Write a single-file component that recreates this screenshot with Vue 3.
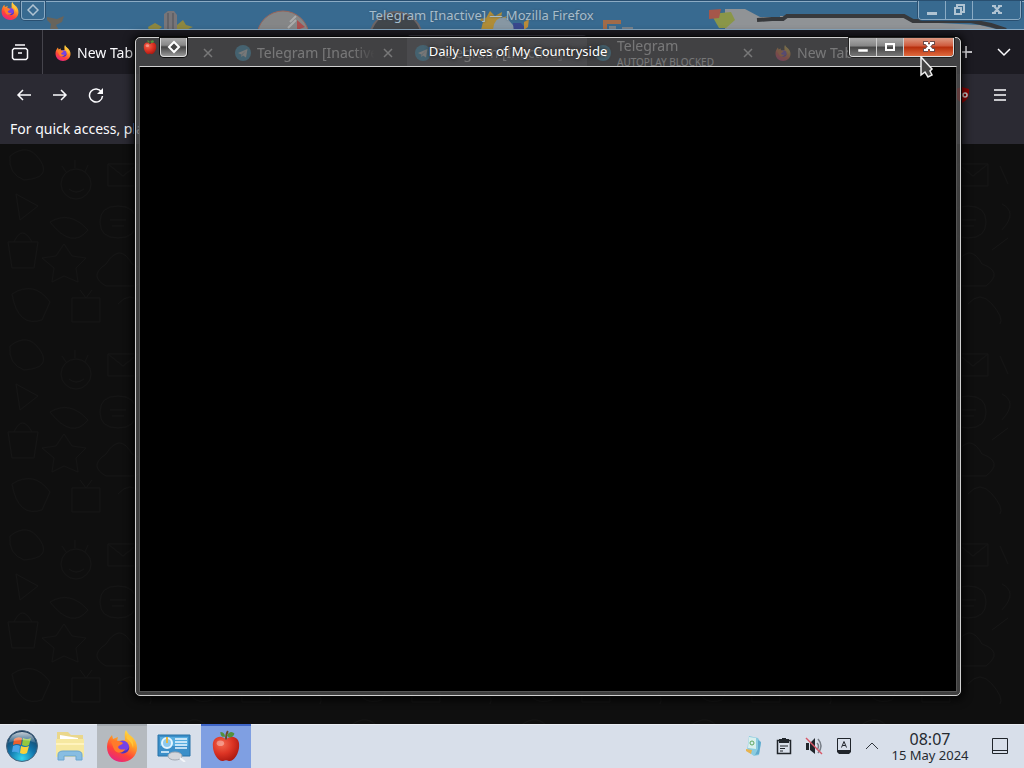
<script setup>
const tabs = [
  { title: 'New Tab', icon: 'fox' },
  { title: 'Telegram [Inactive]', icon: 'plane' },
  { title: 'Telegram [Inactive]', icon: 'plane', active: true, noClose: true },
  { title: 'Telegram', icon: 'plane', note: 'AUTOPLAY BLOCKED' },
  { title: 'New Tab', icon: 'fox', noClose: true },
]
</script>

<template>
  <div class="desktop">
    <svg class="defs" width="0" height="0" aria-hidden="true">
      <defs>
        <linearGradient id="foxBody" x1="0.8" y1="0" x2="0.3" y2="1">
          <stop offset="0" stop-color="#ffe84a" />
          <stop offset="0.4" stop-color="#ff9a27" />
          <stop offset="0.7" stop-color="#ff4438" />
          <stop offset="1" stop-color="#e42584" />
        </linearGradient>
        <radialGradient id="appleBody" cx="0.35" cy="0.3" r="0.8">
          <stop offset="0" stop-color="#f4674d" />
          <stop offset="0.5" stop-color="#dc3424" />
          <stop offset="1" stop-color="#a3140e" />
        </radialGradient>
        <radialGradient id="orb" cx="0.5" cy="0.9" r="0.9">
          <stop offset="0" stop-color="#35d3ec" />
          <stop offset="0.45" stop-color="#1277ae" />
          <stop offset="1" stop-color="#17324f" />
        </radialGradient>
        <linearGradient id="gloss" x1="0" y1="0" x2="0" y2="1">
          <stop offset="0" stop-color="#fff" stop-opacity="0.75" />
          <stop offset="1" stop-color="#fff" stop-opacity="0.1" />
        </linearGradient>
        <symbol id="fox" viewBox="0 0 32 32">
          <path fill="url(#foxBody)" d="M20 0c2 3 2 4 5 6 4 3 6 7 6 12 0 8-7 14-15 14S1 26 1 17C1 12 3 8 6 5l1 4 5-2-1 4 8-1c0-4-1-7 1-10z" />
          <circle cx="16.500" cy="17" r="6.500" fill="#7542e5" />
          <path fill="#4f35b8" d="M11 18c0 4 4 6 8 5 3-1 5-4 4-7 0 5-7 7-12 2z" />
          <path fill="#ff7a2b" d="M5 12c4-3 9-1 12 1-1 2-4 2-5 4 1 3 5 3 7 2-2 5-9 5-11 0-1-2-1-3-3-7z" />
          <path fill="#ffc63b" d="M22 4c5 5 6 10 5 14-1-5-3-7-6-9-1-2 0-4 1-5z" />
        </symbol>
        <symbol id="plane" viewBox="0 0 16 16">
          <circle cx="8" cy="8" r="8" fill="#2ba5dc" />
          <path fill="#fff" d="M3 8l9.500-4-1.500 8.500-3-2-1.500 1.500-.3-2.500z" />
          <path fill="#a9cfe2" d="M6.200 9.500L11 5.500 7.500 10l-1 2z" />
        </symbol>
        <symbol id="apple" viewBox="0 0 32 36">
          <path fill="url(#appleBody)" d="M16 11C10 5 1 9 2 18c0 8 6 17 11 16 2-1 4-1 6 0 5 1 11-8 11-16C31 9 22 5 16 11z" />
          <path d="M16 11c0-4 0-6 2-9" stroke="#6b4a25" stroke-width="2" fill="none" />
          <path fill="#54903a" d="M17 7c2-5 6-5 8-2-1 3-4 6-8 2zM15 8c-4 1-5-2-5-5 3 0 5 2 5 5z" />
          <ellipse cx="10" cy="15" rx="4" ry="3" fill="#fff" opacity="0.35" />
        </symbol>
        <pattern id="doodles" width="170" height="190" patternUnits="userSpaceOnUse">
          <g fill="none" stroke="#151515" stroke-width="1">
            <circle cx="76" cy="40" r="15" /><path d="M62 22l4 6M75 16v8M88 21l-3 7M69 45q7 6 15 0" />
            <path d="M10 12q18-14 30 4t-16 20q-16-6-14-24zM16 50l22 12-18 14zM108 20h30v22h-30zl15 12 15-12" />
            <path d="M50 78q20-12 38 8-16 20-38-8zM118 62q18 0 18 16t-18 16-18-16 18-16M110 76h16M112 82h12" />
            <path d="M8 98h30l-4 26H12zM14 98q8-18 18 0M56 112l8-12 8 12 14 2-10 10 2 14-14-6-12 6 2-14-12-10z" />
            <path d="M106 120q14-22 26 0 22 8 4 22h-30q-18-10 0-22zM12 150q22-14 38 8l-8 18q-24 8-30-26zM72 154h28v24H72zM80 146l6 8 6-8M118 160q12-14 24 0t8 20M142 106l16-12M150 22l8 18M152 60q16 8 0 26" />
          </g>
        </pattern>
      </defs>
    </svg>

    <main class="workspace">
      <section class="browser" aria-label="Mozilla Firefox">
        <header class="browser-title">
          <svg class="art" viewBox="0 0 1024 26" preserveAspectRatio="xMidYMid slice" aria-hidden="true">
            <g transform="translate(0 -3)">
            <path fill="#68645b" d="M47 17l10 2 7-3-2 6-6 3 3 5h-9l1-6-4-4z" />
            <path fill="#777579" d="M164 14l4-3h6l3 4v15h-13z" /><path stroke="#4e5157" d="M168 13v17M173 13v17" />
            <path fill="#8d873f" d="M148 27l7-4 7 4-4 3h-9zM177 25l6-5 3 5 7 2-7 3h-9z" />
            <circle cx="283" cy="37" r="26" fill="#858687" stroke="#98665b" /><path stroke="#aaa" stroke-width="2" d="M290 22l6-6M288 28l8-8" /><path fill="#a94e4e" d="M297 20l8 7-8 3z" />
            <circle cx="396" cy="38" r="26" fill="#41464b" stroke="#6c6566" stroke-width="2" />
            <path fill="#af8c37" d="M481 30l2-8-5-3 8-1 4-7 5 5 7-4-1 6 6-2-3 6 5 8z" /><path fill="#8797a3" d="M493 30q1-15 14-12l10 12z" /><path fill="#38478d" d="M513 23h8l5 6-4 4h-8z" /><path fill="#b98b3b" d="M524 22l5-3-1 8-4 3z" />
            <path fill="#a16b49" d="M603 20h18v4h-14v6h-4z" /><path fill="#77818a" d="M609 26h7v4h-7zM622 27h11v3h-11z" />
            <path fill="#909396" d="M725 9h20l15 8h20v-1h124l14 6 62 3 24 6H725z" />
            <path fill="none" stroke="#37393c" stroke-width="4" d="M757 20l15-1h11l4-3h117l9 5h58l20 4 15 5" />
            <path fill="#8a9648" d="M711 14l20-2 4 8-9 8h-7z" /><path fill="#a5574a" d="M709 10l12-1-2 9-10 1z" />
            </g>
          </svg>
          <svg class="app-icon" width="18" height="18" aria-hidden="true"><use href="#fox" /></svg>
          <button class="sys pale" aria-label="Window menu"><svg width="12" height="12" viewBox="0 0 12 12"><path d="M6 1l5 5-5 5-5-5z" fill="none" stroke="currentColor" stroke-width="1.500" /></svg></button>
          <h2>Telegram [Inactive] — Mozilla Firefox</h2>
          <div class="controls pale">
            <button aria-label="Minimize"><svg width="14" height="14"><path d="M2 9h10v3H2z" fill="currentColor" /></svg></button>
            <button aria-label="Restore"><svg width="14" height="14"><path d="M5 4V2h7v7h-2M3 5h6v6H3z" fill="none" stroke="currentColor" stroke-width="2" /></svg></button>
            <button class="close" aria-label="Close"><svg width="14" height="14"><path d="M4 3l6 7M10 3l-6 7M2 3h4M8 3h4M2 10h4M8 10h4" stroke="currentColor" stroke-width="2" /></svg></button>
          </div>
        </header>

        <nav class="tabbar" aria-label="Tabs">
          <button class="view" aria-label="Recent browsing"><svg width="18" height="18" viewBox="0 0 18 18" fill="none" stroke="currentColor" stroke-width="1.500"><path d="M4 2h10M3 5.500h12l1.500 1.500v8l-1.500 1.500H3L1.500 15V7zM7 10h4" /></svg></button>
          <div class="tabs">
            <div v-for="(tab, i) in tabs" :key="i" class="tab" :class="{ active: tab.active }">
              <svg width="16" height="16" aria-hidden="true"><use :href="'#' + tab.icon" /></svg>
              <span class="tab-text"><span>{{ tab.title }}</span><small v-if="tab.note">{{ tab.note }}</small></span>
              <button v-if="!tab.noClose" aria-label="Close tab"><svg width="10" height="10"><path d="M1 1l8 8M9 1L1 9" stroke="currentColor" stroke-width="1.500" /></svg></button>
            </div>
          </div>
          <button class="add" aria-label="New tab"><svg width="14" height="14"><path d="M7 1v12M1 7h12" stroke="currentColor" stroke-width="1.500" /></svg></button>
          <button class="list" aria-label="List all tabs"><svg width="14" height="14"><path d="M1 4l6 6 6-6" fill="none" stroke="currentColor" stroke-width="1.500" /></svg></button>
        </nav>

        <div class="toolbar">
          <button aria-label="Back"><svg width="16" height="16"><path d="M15 8H2M7 3L2 8l5 5" fill="none" stroke="currentColor" stroke-width="1.500" /></svg></button>
          <button aria-label="Forward"><svg width="16" height="16"><path d="M1 8h13M9 3l5 5-5 5" fill="none" stroke="currentColor" stroke-width="1.500" /></svg></button>
          <button aria-label="Reload"><svg width="16" height="16"><path d="M13.500 5A6.500 6.500 0 1 0 14.500 9" fill="none" stroke="currentColor" stroke-width="1.500" /><path d="M15 1v6H9z" fill="currentColor" /></svg></button>
          <span class="space"></span>
          <button class="shield" aria-label="Content blocker"><svg width="16" height="16"><path d="M8 0l7 2c0 7-1 11-7 14C2 13 1 9 1 2z" fill="#900" /><circle cx="11" cy="8" r="2" fill="none" stroke="#ddd" stroke-width="1.500" /></svg></button>
          <button aria-label="Menu"><svg width="14" height="14"><path d="M1 2h12M1 7h12M1 12h12" stroke="currentColor" stroke-width="1.500" /></svg></button>
        </div>
        <p class="bookmarks">For quick access, place your bookmarks here on the bookmarks toolbar.</p>
        <div class="page"><svg width="100%" height="100%" aria-hidden="true"><rect width="100%" height="100%" fill="url(#doodles)" /></svg></div>
      </section>

      <section class="game" aria-label="Daily Lives of My Countryside">
        <header class="game-title">
          <svg class="app-icon" width="16" height="16" aria-hidden="true"><use href="#apple" /></svg>
          <button class="sys" aria-label="Window menu"><svg width="14" height="14" viewBox="0 0 14 14"><path d="M7 2l5 5-5 5-5-5z" fill="#444" stroke="#fff" stroke-width="2" /></svg></button>
          <h1>Daily Lives of My Countryside</h1>
          <div class="controls">
            <button aria-label="Minimize"><svg width="14" height="14"><path d="M2 9h10v3H2z" fill="#fff" stroke="#555" stroke-width="0.500" /></svg></button>
            <button aria-label="Maximize"><svg width="14" height="14"><path d="M3 4h8v6H3z" fill="none" stroke="#fff" stroke-width="2" /></svg></button>
            <button class="close" aria-label="Close"><svg width="14" height="14"><g fill="none"><path d="M4 3l6 7M10 3l-6 7M1 3h5M8 3h5M1 10h5M8 10h5" stroke="#6d4a4a" stroke-width="4" /><path d="M4 3l6 7M10 3l-6 7M2 3h4M8 3h4M2 10h4M8 10h4" stroke="#fff" stroke-width="2" /></g></svg></button>
          </div>
        </header>
        <div class="screen"></div>
        <svg class="cursor" width="14" height="24" aria-hidden="true"><path d="M1 1v18l4-3 3 5 4-2-2-4 2-2z" fill="#444" stroke="#eee" stroke-width="1.500" /></svg>
      </section>
    </main>

    <footer class="taskbar">
      <button class="start" aria-label="Start"><svg width="34" height="34" viewBox="0 0 34 34">
        <circle cx="17" cy="17" r="15.500" fill="url(#orb)" stroke="#49647d" />
        <path fill="#ec5f2c" d="M9 10q4-3 8-1l-1 7q-4-2-8 0z" /><path fill="#93c83e" d="M18 9q4 2 8 0l-2 7q-3 2-7 0z" />
        <path fill="#4aa4e8" d="M8 17q4-2 7 0l-1 7q-4-2-7-1z" /><path fill="#fbd138" d="M16 17q4 2 8 0l-2 7q-3 2-7 0z" />
        <path fill="url(#gloss)" d="M3 14Q6 3 17 3t14 11q-14-6-28 0z" />
      </svg></button>
      <button class="task" aria-label="Files"><svg width="32" height="34" viewBox="0 0 32 34">
        <path fill="#ead78c" d="M3 3h11l3 3h12v20H3z" /><path fill="#fff" d="M6 6l18 3v4H6z" /><path fill="#f6e8a0" d="M2 10h28v18H2z" /><path fill="#fff3bd" d="M2 14h28v2H2z" />
        <path fill="#87bde2" stroke="#6aa5d0" d="M4 31v-5q0-4 5-4h14q5 0 5 4v5h-6v-4H10v4z" />
      </svg></button>
      <button class="task open" aria-label="Firefox"><svg width="32" height="32"><use href="#fox" /></svg></button>
      <button class="task" aria-label="System settings"><svg width="34" height="32" viewBox="0 0 34 32">
        <path fill="#3b8fc9" stroke="#2872a8" d="M1 5h32v21H1z" /><path fill="#58aee0" d="M3 7h28v9H3z" /><circle cx="10" cy="13" r="5" fill="#8dc9ee" stroke="#e3f5ff" stroke-width="2" /><path d="M10 13V7" stroke="#e6b944" stroke-width="2" />
        <path d="M18 9h12M18 12h12M18 15h12M18 18h12M4 22h8" stroke="#eaf7ff" stroke-width="1.500" /><ellipse cx="18" cy="26" rx="7" ry="4" fill="#d4d7dc" stroke="#a0a8b2" /><path d="M23 28l5 4" stroke="#f4f6f9" stroke-width="2" />
      </svg></button>
      <button class="task current" aria-label="Daily Lives of My Countryside"><svg width="30" height="34"><use href="#apple" /></svg></button>
      <span class="space"></span>
      <button class="tray" aria-label="Recycle helper"><svg width="18" height="22" viewBox="0 0 18 22"><path fill="#8bcce0" d="M4 1l9 2 3 5-2 12-5 1-7-5z" /><path fill="#d9f0ed" d="M4 2l7 1v11l-8-1z" /><path fill="#5fa9cd" d="M13 5l3 2-2 12-4 1 3-6z" /><path fill="#e8b34e" d="M1 14l6 1-1 4-5-3z" /><circle cx="7" cy="8" r="2" fill="none" stroke="#5ea55f" /></svg></button>
      <button class="tray" aria-label="Clipboard"><svg width="16" height="18" viewBox="0 0 16 18"><path d="M1.500 3.500h13v13h-13z" fill="none" stroke="#20252b" stroke-width="1.500" /><path d="M3 2h3V1h4v1h3v4H3z" fill="#20252b" /><path d="M4 9h8M4 11.500h5M4 14h3" stroke="#20252b" /></svg></button>
      <button class="tray" aria-label="Muted"><svg width="18" height="18" viewBox="0 0 18 18"><path d="M1 6h3v7H1zM5 6l5-5v16l-5-4z" fill="#20252b" /><path d="M12 6q3 3 0 7M13 2q6 7 0 14" stroke="#777e87" stroke-width="1.500" fill="none" /><path d="M1 1l16 16" stroke="#d75767" stroke-width="1.500" /></svg></button>
      <button class="tray" aria-label="Keyboard"><svg width="16" height="18" viewBox="0 0 16 18"><path d="M1.500 1.500h13v12h-13z" fill="none" stroke="#20252b" /><path d="M5.500 10.500L8 4.500l2.500 6M6.500 8.500h3" fill="none" stroke="#20252b" /><path d="M1 13h14v2l-2 2H3l-2-2z" fill="#20252b" /></svg></button>
      <button class="more" aria-label="Show hidden icons"><svg width="14" height="10"><path d="M1 8l6-6 6 6" fill="none" stroke="#30363d" /></svg></button>
      <div class="clock"><time>08:07</time><span>15 May 2024</span></div>
      <button class="peek" aria-label="Show desktop"><svg width="18" height="18"><path d="M1.500 1.500h15v15h-15zM1 13.500h16" fill="none" stroke="#20252b" /></svg></button>
    </footer>
  </div>
</template>

<style>
body { margin: 0; background: #0f0f0f; }
</style>

<style scoped>
.desktop { min-height: 100vh; display: flex; flex-direction: column; font-family: "Noto Sans", sans-serif; overflow: hidden; }
.defs { position: absolute; }
button { display: flex; align-items: center; justify-content: center; flex: none; padding: 0; border: 0; background: none; color: inherit; font: inherit; }
svg { display: block; flex: none; }
h1, h2, p { margin: 0; }
.space { flex: 1; }
.workspace { position: relative; flex: 1; display: flex; }
.browser { flex: 1; min-width: 0; display: flex; flex-direction: column; color: #fbfbfe; }
.browser-title { position: relative; height: 30px; box-sizing: border-box; display: flex; align-items: flex-start; background: #386a90; border-top: 1px solid #284e70; border-bottom: 1px solid #8babc4; box-shadow: inset 0 1px #8babc4; padding: 0 3px 0 1px; }
.art { position: absolute; left: 0; top: 2px; width: 100%; height: 26px; }
.browser-title > :not(.art) { position: relative; }
.browser-title .app-icon { margin: 1px 0 0; }
.browser-title .sys { margin-left: 2px; }
.browser-title h2 { flex: 1; text-align: center; font-size: 13px; line-height: 28px; font-weight: 400; color: #a6bdcd; text-shadow: 0 0 2px #415565; }
.sys { box-sizing: border-box; width: 27px; height: 19px; border: 1px solid #ddd; border-top: 0; border-radius: 0 0 4px 4px; background: linear-gradient(#aaa, #888 40%, #444 50%, #999); box-shadow: 0 0 0 1px #111; }
.controls { display: flex; height: 18px; border: 1px solid #ddd; border-top: 0; border-radius: 0 0 4px 4px; box-shadow: 0 0 0 1px #222; overflow: hidden; }
.controls button { box-sizing: border-box; width: 27px; height: 18px; border-right: 1px solid #ccc; background: linear-gradient(#aaa, #858585 45%, #444 50%, #777); }
.controls .close { width: 49px; border: 0; background: linear-gradient(#df9a82, #ce583b 45%, #b62d0b 50%, #df6a3e); }
.sys.pale, .controls.pale { color: #b0c3d2; background: none; border-color: #8babc4; box-shadow: 0 0 0 1px #294f70; }
.sys.pale { width: 24px; }
.controls.pale button, .controls.pale .close { background: #386a90; border-color: #8babc4; }
.controls.pale .close { width: 47px; }
.tabbar { height: 44px; display: flex; background: #1c1b22; }
.view { width: 42px; padding-right: 2px; border-right: 1px solid #45444c; box-sizing: content-box; width: 40px; }
.tabs { flex: 1; min-width: 0; display: flex; padding-left: 4px; }
.tab { flex: 0 1 180px; min-width: 0; box-sizing: border-box; display: flex; align-items: center; gap: 6px; padding: 2px 14px 0 8px; }
.tab.active { background: #42414d; border-radius: 4px; margin: 5px 0; }
.tab-text { flex: 1; min-width: 0; overflow: hidden; display: flex; flex-direction: column; white-space: nowrap; font-size: 14px; line-height: 18px; }
.tab-text > span { overflow: hidden; mask-image: linear-gradient(90deg, #000 80%, transparent 98%); }
.tab-text small { font-size: 10px; line-height: 14px; }
.tab button { width: 10px; height: 16px; }
.add { width: 36px; }
.list { width: 40px; }
.toolbar { height: 42px; display: flex; align-items: center; padding: 0 6px; background: #2b2a33; }
.toolbar button { width: 36px; height: 32px; }
.toolbar .shield { width: 40px; }
.bookmarks { height: 28px; padding-left: 10px; background: #2b2a33; font-size: 14px; line-height: 26px; overflow: hidden; white-space: nowrap; }
.page { flex: 1; min-height: 0; position: relative; background: #0f0f0f; }
.page svg { position: absolute; }
.game { position: absolute; left: 135px; right: 63px; top: 37px; bottom: 28px; box-sizing: border-box; display: flex; flex-direction: column; border: 1px solid #d0d0d0; border-radius: 5px; padding: 0 3px 3px; background: rgba(78, 78, 78, 0.76); box-shadow: 0 0 0 1px #080808, 0 1px 9px 3px rgba(0, 0, 0, 0.75); }
.game-title { height: 28px; display: flex; align-items: flex-start; padding: 0 3px; }
.game-title .app-icon { margin: 1px 2px 0 0; }
.game-title h1 { flex: 1; text-align: center; font-size: 13px; line-height: 27px; font-weight: 400; color: #fff; text-shadow: 0 0 3px #222, 0 0 5px #222; }
.screen { flex: 1; background: #000; border: 1px solid #555; border-top-color: #d0d0d0; }
.cursor { position: absolute; right: 26px; top: 18px; }
.taskbar { height: 44px; display: flex; gap: 2px; background: #d8dfea; box-shadow: inset 0 1px #e9edf3; color: #252a30; }
.start { width: 43px; }
.task { width: 50px; }
.task.open { background: #b5babf; box-shadow: inset 0 2px #a3a9af; }
.task.current { background: #7f9fe2; box-shadow: inset 0 2px #3f66c8; }
.tray { width: 28px; }
.more { width: 24px; }
.clock { width: 88px; display: flex; flex-direction: column; align-items: center; padding-top: 6px; font-size: 13px; line-height: 14px; white-space: nowrap; }
.clock time { font-size: 16px; line-height: 18px; }
.peek { width: 48px; }
</style>
